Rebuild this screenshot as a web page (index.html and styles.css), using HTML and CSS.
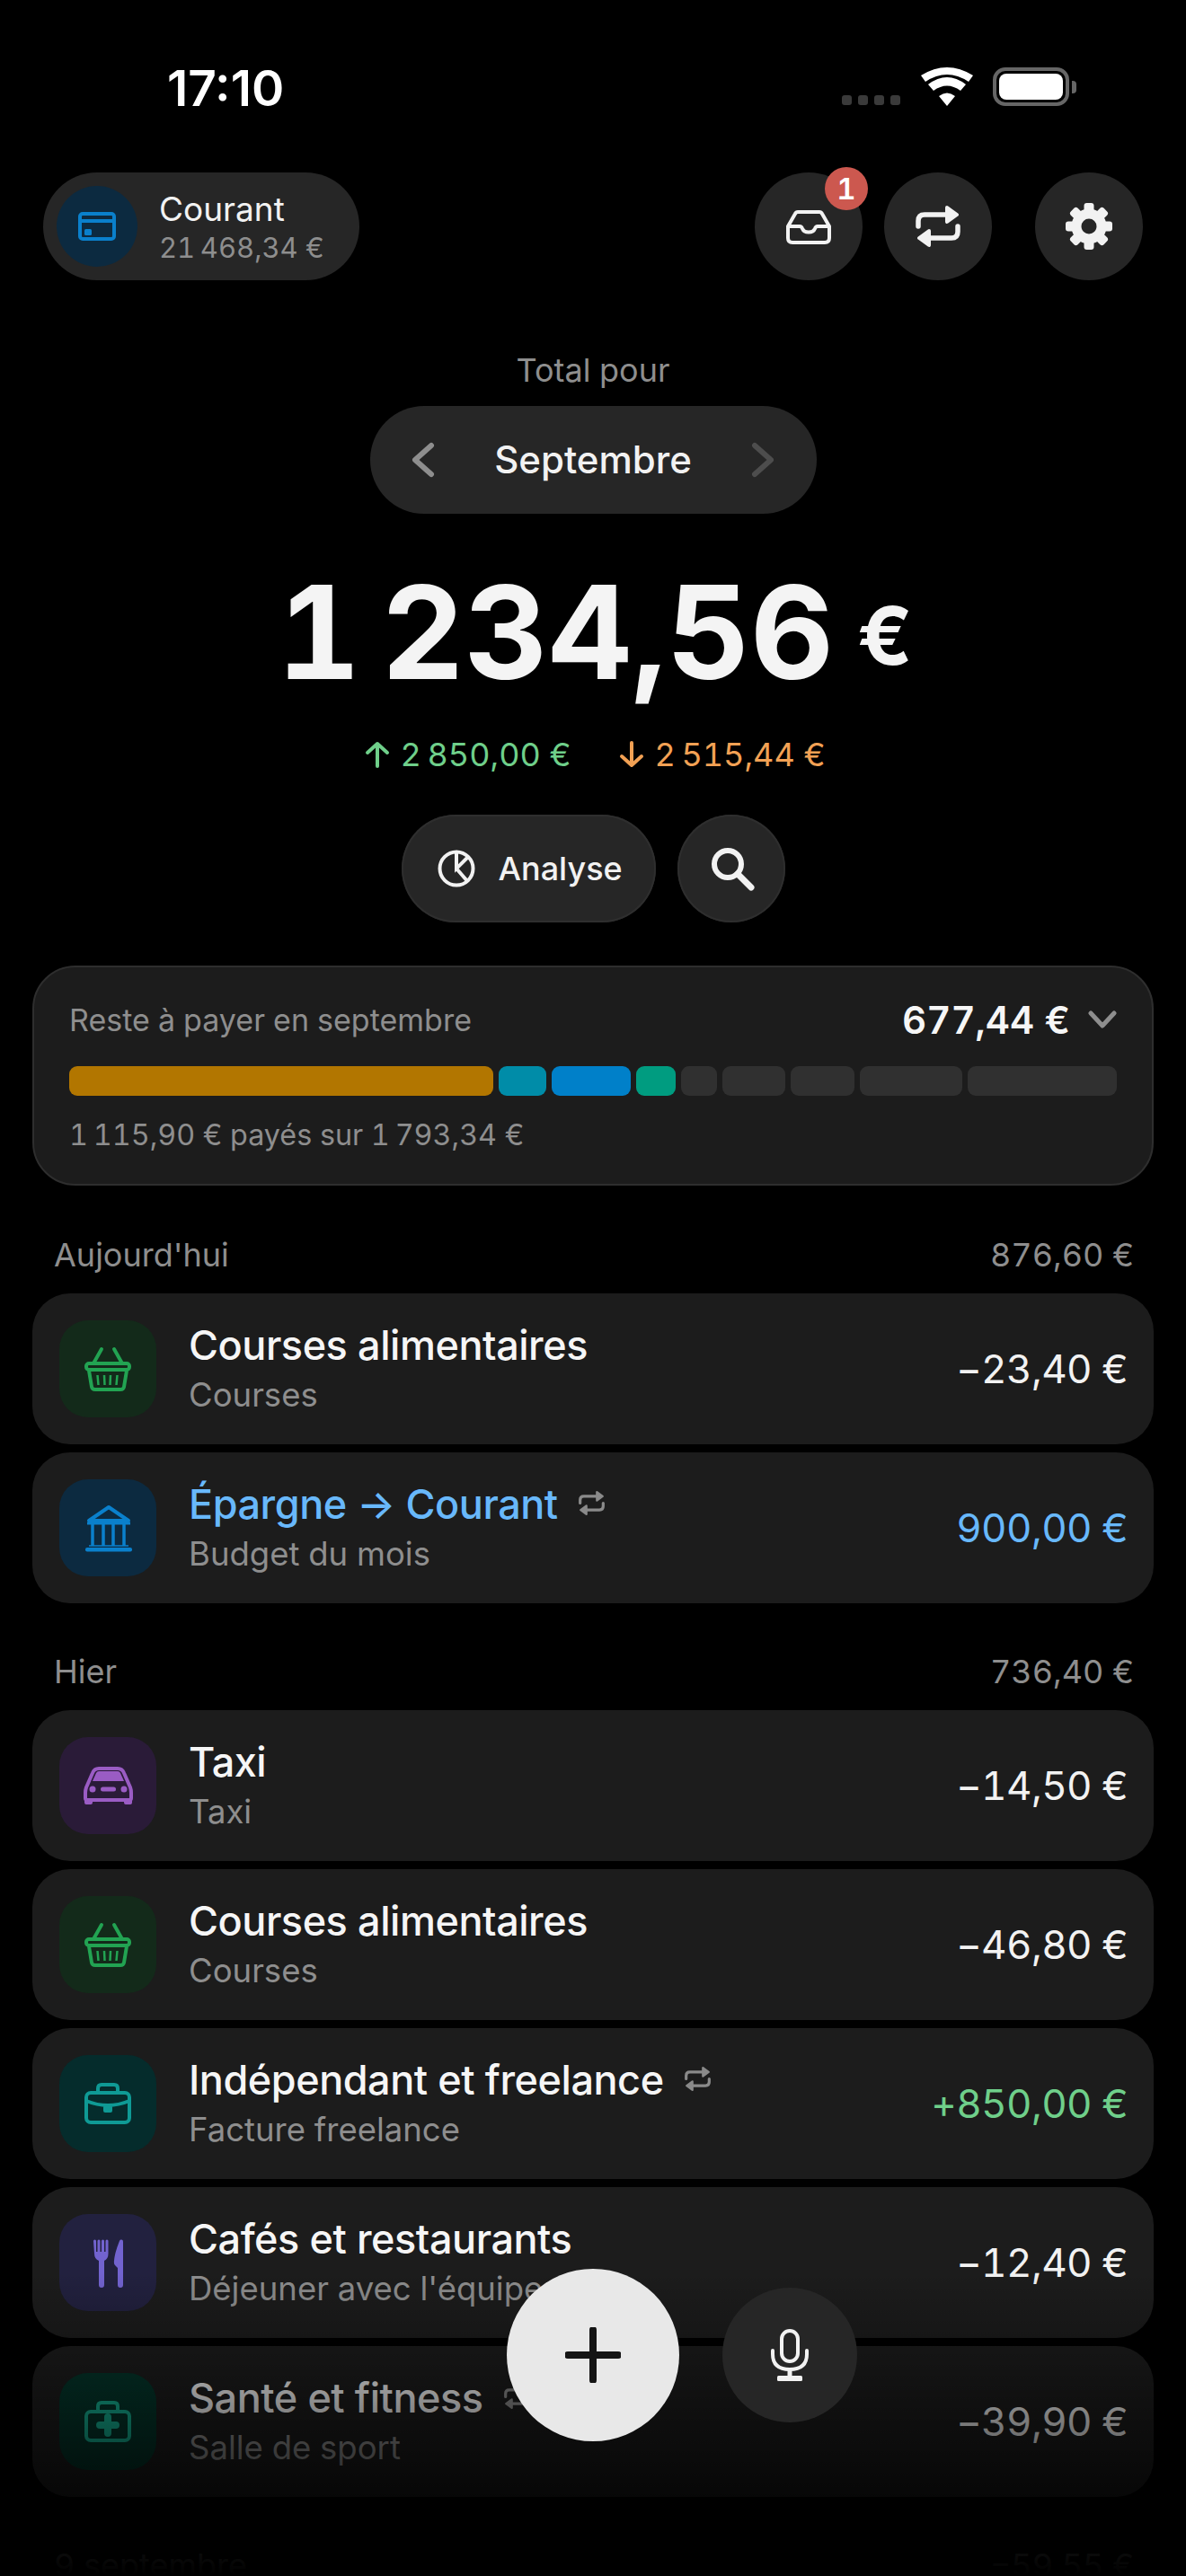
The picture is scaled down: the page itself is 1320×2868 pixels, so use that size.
FILE: index.html
```html
<!DOCTYPE html>
<html lang="fr">
<head>
<meta charset="utf-8">
<title>Budget</title>
<link rel="stylesheet" href="styles.css">
</head>
<body>
<svg class="defs" width="0" height="0" aria-hidden="true">
  <symbol id="repeat" viewBox="0 0 60 60">
    <path d="M8 30v-6q0-7 7-7h28M52 30v6q0 7-7 7H18" fill="none" stroke="currentColor" stroke-width="5.5" stroke-linecap="round"/>
    <path d="M40 9l11 8-11 8zM20 35L9 43l11 8z" fill="currentColor" stroke="currentColor" stroke-width="4" stroke-linejoin="round"/>
  </symbol>
  <symbol id="basket" viewBox="0 0 108 108">
    <path d="M47 32l-9 16M61 32l9 16" fill="none" stroke="currentColor" stroke-width="4" stroke-linecap="round"/>
    <rect x="30" y="48" width="48" height="7" rx="3" fill="none" stroke="currentColor" stroke-width="4"/>
    <path d="M33 56l3 18q.5 3 4 3h28q3.500 0 4-3l3-18" fill="none" stroke="currentColor" stroke-width="4"/>
    <path d="M42.500 61l1 11M50 61l.5 11M57 61l-.5 11M64.500 61l-1 11" fill="none" stroke="currentColor" stroke-width="2.500"/>
  </symbol>
</svg>
<main class="phone">
  <header class="status">
    <span class="time">17:10</span>
    <div class="status-right">
      <div class="signal"><i></i><i></i><i></i><i></i></div>
      <svg class="wifi" viewBox="0 0 58 43"><path d="M29 43L20 32q9-7 18 0zM14 26L8 19q21-16 42 0l-6 7q-15-11-30 0zM5 16L0 9q29-18 58 0l-5 7Q29 0 5 16z" fill="#fff"/></svg>
      <div class="battery"><div class="battery-body"><div class="battery-fill"></div></div><div class="battery-nub"></div></div>
    </div>
  </header>

  <nav class="topbar">
    <div class="account">
      <div class="account-icon">
        <svg class="ico-60" viewBox="0 0 60 60"><rect x="11" y="16" width="38" height="28" rx="3" fill="none" stroke="#0a80cc" stroke-width="4"/><path d="M11 24h38" stroke="#0a80cc" stroke-width="4"/><rect x="16" y="33" width="8" height="7" rx="1.500" fill="#0a80cc"/></svg>
      </div>
      <div class="account-text">
        <div class="account-name">Courant</div>
        <div class="account-sum">21&#8239;468,34 €</div>
      </div>
    </div>
    <div class="actions">
      <button class="circle badge-host">
        <svg class="ico-60" viewBox="0 0 60 60"><path d="M7 30l8-14q1-2 3-2h24q2 0 3 2l8 14v13q0 5-5 5H12q-5 0-5-5zM7 30h13c2 0 2.500 1 3 2.500 1 2.500 3 4 7 4s6-1.500 7-4c.5-1.500 1-2.500 3-2.500h13" fill="none" stroke="#f2f2f2" stroke-width="4" stroke-linejoin="round"/></svg>
        <span class="badge">1</span>
      </button>
      <button class="circle"><svg class="ico-60 light"><use href="#repeat"/></svg></button>
      <button class="circle gear-btn">
        <svg class="ico-60" viewBox="0 0 60 60">
          <g fill="#f2f2f2">
            <rect x="24.500" y="4" width="11" height="52" rx="3"/>
            <rect x="24.500" y="4" width="11" height="52" rx="3" transform="rotate(45 30 30)"/>
            <rect x="24.500" y="4" width="11" height="52" rx="3" transform="rotate(90 30 30)"/>
            <rect x="24.500" y="4" width="11" height="52" rx="3" transform="rotate(135 30 30)"/>
            <circle cx="30" cy="30" r="19.500"/>
          </g>
          <circle cx="30" cy="30" r="8.500" fill="#262626"/>
        </svg>
      </button>
    </div>
  </nav>

  <section class="hero">
    <div class="hero-label">Total pour</div>
    <div class="month">
      <svg class="chev" viewBox="0 0 30 44"><path d="M24 6L6 22l18 16" fill="none" stroke="#8e8e8e" stroke-width="6" stroke-linecap="round" stroke-linejoin="round"/></svg>
      <span class="month-name">Septembre</span>
      <svg class="chev" viewBox="0 0 30 44"><path d="M6 6l18 16L6 38" fill="none" stroke="#4d4d4d" stroke-width="6" stroke-linecap="round" stroke-linejoin="round"/></svg>
    </div>
    <div class="total">1&#8239;234,56<span class="total-cur">€</span></div>
    <div class="flows">
      <div class="flow in">
        <svg class="arrow" viewBox="0 0 28 30"><path d="M14 28V3M3 13L14 3l11 10" fill="none" stroke="currentColor" stroke-width="4" stroke-linecap="round" stroke-linejoin="round"/></svg>
        <span>2&#8239;850,00 €</span>
      </div>
      <div class="flow out">
        <svg class="arrow" viewBox="0 0 28 30"><path d="M14 2v25M3 17l11 10 11-10" fill="none" stroke="currentColor" stroke-width="4" stroke-linecap="round" stroke-linejoin="round"/></svg>
        <span>2&#8239;515,44 €</span>
      </div>
    </div>
    <div class="tools">
      <button class="analyse">
        <svg class="pie" viewBox="0 0 44 44"><circle cx="22" cy="22" r="18.500" fill="none" stroke="#f2f2f2" stroke-width="4"/><path d="M22 4v18l13-13M22 22l13 15" fill="none" stroke="#f2f2f2" stroke-width="4"/></svg>
        <span>Analyse</span>
      </button>
      <button class="circle bordered">
        <svg class="ico-60" viewBox="0 0 60 60"><circle cx="26" cy="25" r="15" fill="none" stroke="#f2f2f2" stroke-width="6"/><path d="M37 36l15 15" stroke="#f2f2f2" stroke-width="7" stroke-linecap="round"/></svg>
      </button>
    </div>
  </section>

  <section class="budget">
    <div class="budget-head">
      <span class="budget-label">Reste à payer en septembre</span>
      <div class="budget-right">
        <span class="budget-amount">677,44 €</span>
        <svg class="chev-down" viewBox="0 0 32 20"><path d="M3 3l13 14L29 3" fill="none" stroke="#8e8e8e" stroke-width="5" stroke-linecap="round" stroke-linejoin="round"/></svg>
      </div>
    </div>
    <div class="segments">
      <i class="seg amber" style="flex:472"></i>
      <i class="seg teal" style="flex:53"></i>
      <i class="seg blue" style="flex:89"></i>
      <i class="seg green" style="flex:44"></i>
      <i class="seg" style="flex:40"></i>
      <i class="seg" style="flex:70"></i>
      <i class="seg" style="flex:71"></i>
      <i class="seg" style="flex:114"></i>
      <i class="seg" style="flex:166"></i>
    </div>
    <div class="budget-foot">1&#8239;115,90 € payés sur 1&#8239;793,34 €</div>
  </section>

  <section class="day first">
    <div class="day-head"><span>Aujourd'hui</span><span>876,60 €</span></div>
    <div class="rows">
      <article class="row">
        <div class="tile t-green"><svg class="tile-svg"><use href="#basket"/></svg></div>
        <div class="info"><div class="title-line"><span class="title">Courses alimentaires</span></div><div class="sub">Courses</div></div>
        <div class="amount">−23,40 €</div>
      </article>
      <article class="row">
        <div class="tile t-blue">
          <svg class="tile-svg" viewBox="0 0 108 108"><path d="M55 31L33 46h44z" fill="none" stroke="currentColor" stroke-width="4" stroke-linejoin="round"/><path d="M31 49h48" stroke="currentColor" stroke-width="3"/><path d="M37 50v24M49 50v24M60 50v24M72 50v24" stroke="currentColor" stroke-width="3.500"/><path d="M33 74h44" stroke="currentColor" stroke-width="1.500"/><rect x="29" y="76" width="52" height="4.500" rx="2" fill="currentColor"/></svg>
        </div>
        <div class="info"><div class="title-line"><span class="title transfer">Épargne → Courant</span><svg class="mini"><use href="#repeat"/></svg></div><div class="sub">Budget du mois</div></div>
        <div class="amount transfer">900,00 €</div>
      </article>
    </div>
  </section>

  <section class="day">
    <div class="day-head"><span>Hier</span><span>736,40 €</span></div>
    <div class="rows">
      <article class="row">
        <div class="tile t-purple">
          <svg class="tile-svg" viewBox="0 0 108 108"><path d="M30 56l7-16q2-5 7-5h21q5 0 7 5l7 16q1 3 1 6v6q0 2-2 2H31q-2 0-2-2v-6q0-3 1-6z" fill="none" stroke="currentColor" stroke-width="4"/><path d="M37 49l4-9q1-2 3-2h21q2 0 3 2l4 9z" fill="currentColor"/><circle cx="37" cy="58" r="3.500" fill="currentColor"/><circle cx="72" cy="58" r="3.500" fill="currentColor"/><rect x="46" y="55.500" width="17" height="5" rx="2.500" fill="currentColor"/><path d="M28 68h9v5q0 2-2 2h-5q-2 0-2-2zM72 68h9v5q0 2-2 2h-5q-2 0-2-2z" fill="currentColor"/></svg>
        </div>
        <div class="info"><div class="title-line"><span class="title">Taxi</span></div><div class="sub">Taxi</div></div>
        <div class="amount">−14,50 €</div>
      </article>
      <article class="row">
        <div class="tile t-green"><svg class="tile-svg"><use href="#basket"/></svg></div>
        <div class="info"><div class="title-line"><span class="title">Courses alimentaires</span></div><div class="sub">Courses</div></div>
        <div class="amount">−46,80 €</div>
      </article>
      <article class="row">
        <div class="tile t-teal">
          <svg class="tile-svg" viewBox="0 0 108 108"><path d="M43 42v-5q0-4 4-4h14q4 0 4 4v5" fill="none" stroke="currentColor" stroke-width="4"/><rect x="30" y="42" width="48" height="33" rx="5" fill="none" stroke="currentColor" stroke-width="4"/><path d="M30 51q24 10 48 0" fill="none" stroke="currentColor" stroke-width="4"/><rect x="49" y="56" width="10" height="8" rx="2" fill="currentColor"/></svg>
        </div>
        <div class="info"><div class="title-line"><span class="title">Indépendant et freelance</span><svg class="mini"><use href="#repeat"/></svg></div><div class="sub">Facture freelance</div></div>
        <div class="amount income">+850,00 €</div>
      </article>
      <article class="row">
        <div class="tile t-indigo">
          <svg class="tile-svg" viewBox="0 0 108 108"><path d="M38 30a1.500 1.500 0 0 1 3 0v12h1.500V30a1.500 1.500 0 0 1 3 0v12H47V30a1.500 1.500 0 0 1 3 0v12h1.500V30a1.500 1.500 0 0 1 3 0v14q0 6-4.500 8v27a3 3 0 0 1-6 0V52q-5-2-5-8z" fill="currentColor"/><path d="M71 31v48a3 3 0 0 1-6 0V60l-3-3q-1.500-1.500-1-5c.6-8 4-17 6-22 1-2 4-2 4 1z" fill="currentColor"/></svg>
        </div>
        <div class="info"><div class="title-line"><span class="title">Cafés et restaurants</span></div><div class="sub">Déjeuner avec l'équipe</div></div>
        <div class="amount">−12,40 €</div>
      </article>
      <article class="row">
        <div class="tile t-mint">
          <svg class="tile-svg" viewBox="0 0 108 108"><path d="M43 43v-6q0-4 4-4h14q4 0 4 4v6" fill="none" stroke="currentColor" stroke-width="4"/><rect x="30" y="43" width="48" height="32" rx="5" fill="none" stroke="currentColor" stroke-width="4"/><path d="M54 49v18M45 58h18" stroke="currentColor" stroke-width="8" stroke-linecap="round"/></svg>
        </div>
        <div class="info"><div class="title-line"><span class="title">Santé et fitness</span><svg class="mini"><use href="#repeat"/></svg></div><div class="sub">Salle de sport</div></div>
        <div class="amount">−39,90 €</div>
      </article>
    </div>
  </section>

  <section class="day">
    <div class="day-head"><span>9 septembre</span><span>−59,55 €</span></div>
  </section>

  <div class="fade"></div>
  <button class="fab">
    <svg class="plus" viewBox="0 0 62 62"><path d="M31 3v56M3 31h56" stroke="#141414" stroke-width="8" stroke-linecap="round"/></svg>
  </button>
  <button class="mic">
    <svg class="mic-svg" viewBox="0 0 44 60"><rect x="13" y="3" width="18" height="34" rx="9" fill="none" stroke="#f2f2f2" stroke-width="4"/><path d="M3 25v4q0 17 19 17t19-17v-4" fill="none" stroke="#f2f2f2" stroke-width="4" stroke-linecap="round"/><path d="M22 46v8" stroke="#f2f2f2" stroke-width="5"/><rect x="8" y="53" width="28" height="6" rx="1.500" fill="#f2f2f2"/></svg>
  </button>
</main>
</body>
</html>
```

FILE: styles.css
```css
* { box-sizing: border-box; }
html, body { margin: 0; padding: 0; background: #000; }
body { font-family: Inter, "Liberation Sans", sans-serif; color: #f2f2f2; font-variant-numeric: tabular-nums; }
button { font: inherit; color: inherit; border: 0; padding: 0; cursor: pointer; font-variant-numeric: tabular-nums; }
.defs { position: absolute; }
.phone { position: relative; width: 1320px; height: 2868px; overflow: hidden; background: #000; }

.status { height: 192px; display: flex; justify-content: space-between; align-items: flex-start; padding: 0 122px 0 186px; }
.time { font-size: 55px; font-weight: 600; line-height: 64px; margin-top: 66px; color: #fff; font-variant-numeric: normal; }
.status-right { display: flex; align-items: flex-start; margin-top: 75px; }
.signal { display: flex; gap: 7px; margin-top: 31px; margin-right: 23px; }
.signal i { width: 11px; height: 11px; border-radius: 3px; background: #3a3a3a; }
.wifi { width: 58px; height: 43px; margin-right: 22px; }
.battery { display: flex; align-items: center; }
.battery-body { width: 85px; height: 43px; border: 4px solid #666; border-radius: 14px; padding: 3px; }
.battery-fill { width: 100%; height: 100%; background: #fff; border-radius: 8px; }
.battery-nub { width: 5px; height: 14px; background: #666; border-radius: 0 4px 4px 0; margin-left: 3px; }

.topbar { display: flex; justify-content: space-between; padding: 0 48px; height: 120px; }
.account { display: flex; align-items: center; width: 352px; height: 120px; background: #262626; border-radius: 60px; padding-left: 15px; }
.account-icon { width: 90px; height: 90px; border-radius: 50%; background: #0c2a40; display: flex; align-items: center; justify-content: center; }
.account-text { margin-left: 24px; }
.account-name { font-size: 37px; line-height: 48px; color: #f2f2f2; }
.account-sum { font-size: 31px; line-height: 38px; letter-spacing: -.3px; color: #8e8e8e; }
.ico-60 { width: 60px; height: 60px; display: block; }
.light { color: #f2f2f2; }
.actions { display: flex; gap: 24px; }
.circle { position: relative; width: 120px; height: 120px; border-radius: 50%; background: #262626; display: flex; align-items: center; justify-content: center; }
.gear-btn { margin-left: 24px; }
.bordered { box-shadow: inset 0 0 0 2px #2e2e2e; }
.badge { position: absolute; top: -6px; left: 78px; width: 48px; height: 48px; border-radius: 50%; background: #cc584f; color: #fff; font-size: 33px; font-weight: 600; line-height: 48px; text-align: center; }

.hero { display: flex; flex-direction: column; align-items: center; }
.hero-label { margin-top: 76px; font-size: 36px; line-height: 48px; color: #8e8e8e; }
.month { margin-top: 16px; width: 497px; height: 120px; border-radius: 60px; background: #262626; display: flex; align-items: center; justify-content: space-between; padding: 0 44px; }
.chev { width: 30px; height: 44px; }
.month-name { font-size: 42px; font-weight: 450; color: #f2f2f2; margin-top: -2px; }
.total { margin: 60px 0 0 4px; font-size: 144px; line-height: 144px; height: 144px; font-weight: 670; color: #f4f4f4; white-space: nowrap; }
.total-cur { font-size: 90px; margin-left: 26px; vertical-align: 16px; line-height: 1; }
.flows { margin: 40px 0 0 4px; display: flex; gap: 53px; font-size: 36px; line-height: 48px; }
.flow { display: flex; align-items: center; gap: 12px; }
.in { color: #6fcf8a; }
.out { color: #f2a154; }
.arrow { width: 28px; height: 30px; }
.tools { margin-top: 43px; display: flex; gap: 24px; }
.analyse { width: 283px; height: 120px; border-radius: 60px; background: #262626; box-shadow: inset 0 0 0 2px #2e2e2e; display: flex; align-items: center; padding-left: 39px; gap: 25px; font-size: 36px; font-weight: 450; }
.pie { width: 44px; height: 44px; }

.budget { margin: 48px 36px 0; height: 245px; background: #1c1c1c; border: 2px solid #2e2e2e; border-radius: 48px; padding: 0 39px; }
.budget-head { height: 110px; padding-top: 6px; display: flex; justify-content: space-between; align-items: center; }
.budget-label { font-size: 34px; color: #8e8e8e; }
.budget-right { display: flex; align-items: center; gap: 20px; }
.budget-amount { font-size: 42px; font-weight: 600; color: #f6f6f6; }
.chev-down { width: 32px; height: 20px; }
.segments { display: flex; gap: 6px; height: 33px; }
.seg { display: block; height: 33px; border-radius: 9px; background: #303030; }
.amber { background: #b27600; }
.teal { background: #008ca8; }
.blue { background: #0080c9; }
.green { background: #009c80; }
.budget-foot { margin-top: 20px; font-size: 32.300px; line-height: 48px; color: #8e8e8e; }

.day { margin: 52px 36px 0; }
.day.first { margin-top: 53px; }
.day-head { display: flex; justify-content: space-between; padding: 0 22px 0 24px; font-size: 36px; line-height: 48px; color: #8e8e8e; }
.rows { margin-top: 19px; display: flex; flex-direction: column; gap: 9px; }
.row { height: 168px; display: flex; align-items: center; background: #1c1c1c; border-radius: 42px; padding: 0 29px 0 30px; }
.tile { width: 108px; height: 108px; flex: none; border-radius: 32px; }
.tile-svg { width: 108px; height: 108px; display: block; }
.t-green { background: #132a1a; color: #22a352; }
.t-blue { background: #0c2a40; color: #0a80cc; }
.t-purple { background: #2a1b38; color: #9a5cc4; }
.t-teal { background: #052c2c; color: #0f9a95; }
.t-indigo { background: #22213f; color: #7263cf; }
.t-mint { background: #04352a; color: #15ae90; }
.info { flex: 1; margin-left: 36px; padding-top: 3px; }
.title-line { display: flex; align-items: center; gap: 20px; height: 52px; }
.title { font-size: 45px; font-weight: 450; letter-spacing: -.45px; color: #f6f6f6; }
.title.transfer { color: #68b8fb; }
.mini { width: 35px; height: 35px; color: #8a8a8a; margin-top: -2px; }
.sub { font-size: 36.500px; line-height: 54px; margin-top: 3px; color: #8e8e8e; }
.amount { font-size: 44px; letter-spacing: -.6px; color: #f2f2f2; white-space: nowrap; }
.amount.transfer { color: #68b8fb; }
.amount.income { color: #6fcf8a; }

.fade { position: absolute; left: 0; right: 0; bottom: 0; height: 338px; background: linear-gradient(to bottom, rgba(0,0,0,0), #000); pointer-events: none; }
.fab { position: absolute; left: 564px; top: 2526px; width: 192px; height: 192px; border-radius: 50%; background: #e8e8e8; display: flex; align-items: center; justify-content: center; }
.plus { width: 62px; height: 62px; }
.mic { position: absolute; left: 804px; top: 2547px; width: 150px; height: 150px; border-radius: 50%; background: #262626; display: flex; align-items: center; justify-content: center; }
.mic-svg { width: 44px; height: 60px; }
```
